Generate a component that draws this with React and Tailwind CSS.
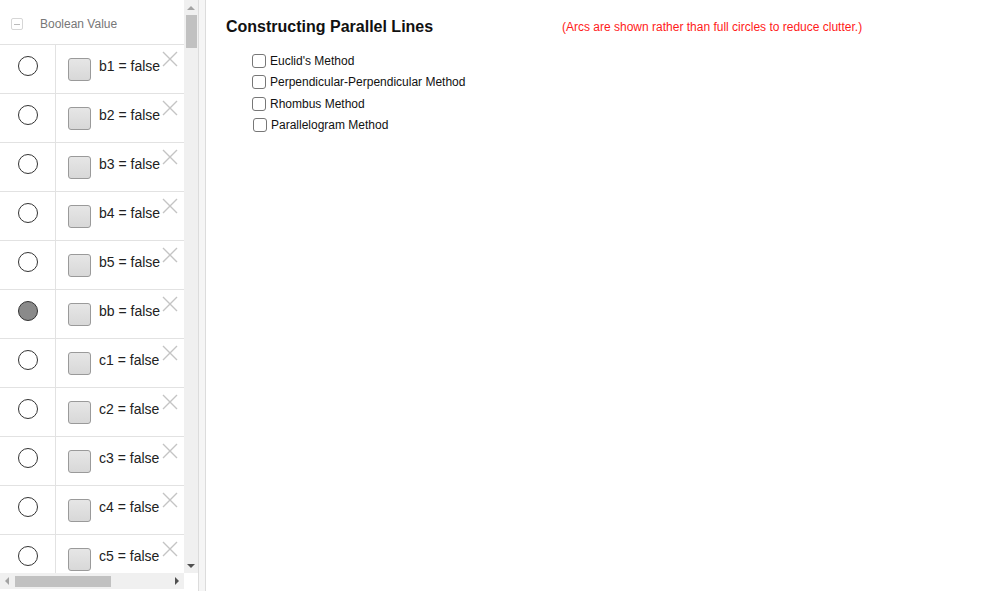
import React from 'react'

const ROWS = ['b1', 'b2', 'b3', 'b4', 'b5', 'bb', 'c1', 'c2', 'c3', 'c4', 'c5']
const METHODS = ['Euclid\'s Method', 'Perpendicular-Perpendicular Method', 'Rhombus Method', 'Parallelogram Method']

function CloseX() {
  return (
    <svg width="18" height="18" viewBox="0 0 18 18" className="absolute right-[5px] top-[5px]">
      <path d="M2 2L16 16M16 2L2 16" stroke="#c4c4c4" strokeWidth="1.4" fill="none" />
    </svg>
  )
}

function Row({ name }) {
  const on = name === 'bb'
  return (
    <div className="flex h-[49px] shrink-0 border-b border-[#e2e2e2]">
      <div className="w-[56px] shrink-0 flex items-center justify-center border-r border-[#e2e2e2] pb-[6px]">
        <div className={`w-[20px] h-[20px] rounded-full border-[1.5px] border-[#333] ${on ? 'bg-[#8a8a8a]' : 'bg-white'}`} />
      </div>
      <div className="relative flex-1 flex items-center pl-[12px]">
        <div className="w-[23px] h-[23px] rounded-[3px] border border-[#9a9a9a] bg-gradient-to-b from-[#e6e6e6] to-[#d8d8d8] mt-[1px]" />
        <span className="ml-[8px] text-[14px] text-[#222] leading-none -mt-[6px]">
          {name} = false
        </span>
        <CloseX />
      </div>
    </div>
  )
}

export default function App() {
  return (
    <div className="flex w-[1003px] h-[591px] bg-white overflow-hidden" style={{ fontFamily: '"Liberation Sans", Arial, sans-serif' }}>
      {/* algebra view */}
      <div className="w-[198px] shrink-0 flex flex-col h-full">
        <div className="flex h-[573px]">
          <div className="w-[184px] flex flex-col overflow-hidden">
            <div className="h-[45px] shrink-0 flex items-center border-b border-[#e2e2e2] pl-[11px] pt-[4px]">
              <div className="w-[12px] h-[12px] rounded-[2px] border border-[#d6d6d6] flex items-center justify-center">
                <div className="w-[6px] h-px bg-[#bbb]" />
              </div>
              <span className="ml-[17px] text-[12px] text-[#777]">Boolean Value</span>
            </div>
            {ROWS.map(r => <Row key={r} name={r} />)}
          </div>
          <div className="w-[14px] bg-[#f0f0f0] flex flex-col items-center">
            <div className="h-[15px] flex items-center justify-center">
              <div className="w-0 h-0 border-x-[4px] border-x-transparent border-b-[4px] border-b-[#a3a3a3]" />
            </div>
            <div className="w-[11px] h-[33px] bg-[#c1c1c1] ml-[1px]" />
            <div className="flex-1" />
            <div className="h-[15px] flex items-center justify-center">
              <div className="w-0 h-0 border-x-[4px] border-x-transparent border-t-[4px] border-t-[#505050]" />
            </div>
          </div>
        </div>
        <div className="flex h-[16px]">
          <div className="w-[184px] bg-[#f0f0f0] flex items-center">
            <div className="w-[14px] flex justify-center">
              <div className="w-0 h-0 border-y-[4px] border-y-transparent border-r-[4px] border-r-[#a3a3a3]" />
            </div>
            <div className="w-[96px] h-[11px] bg-[#c1c1c1] ml-px" />
            <div className="flex-1" />
            <div className="w-[14px] flex justify-center">
              <div className="w-0 h-0 border-y-[4px] border-y-transparent border-l-[4px] border-l-[#505050]" />
            </div>
          </div>
        </div>
      </div>
      {/* divider */}
      <div className="w-[8px] shrink-0 h-full bg-[#f5f5f5] border-l border-r border-[#dcdcdc]" />
      {/* graphics view */}
      <div className="flex-1 relative">
        <div className="absolute left-[20px] top-[15px] text-[16px] font-bold text-[#111]">Constructing Parallel Lines</div>
        <div className="absolute left-[356px] top-[18px] text-[12px] text-[#ff1a1a]">(Arcs are shown rather than full circles to reduce clutter.)</div>
        <div className="absolute left-[46px] top-[54px] flex flex-col gap-[7.4px]">
          {METHODS.map((m, i) => (
            <label key={m} className={`flex items-center gap-[4px] text-[12px] text-[#111] h-[14px] ${i === 3 ? 'ml-px' : ''}`}>
              <span className="w-[14px] h-[14px] rounded-[3px] border border-[#777] bg-white shrink-0" />
              {m}
            </label>
          ))}
        </div>
      </div>
    </div>
  )
}
